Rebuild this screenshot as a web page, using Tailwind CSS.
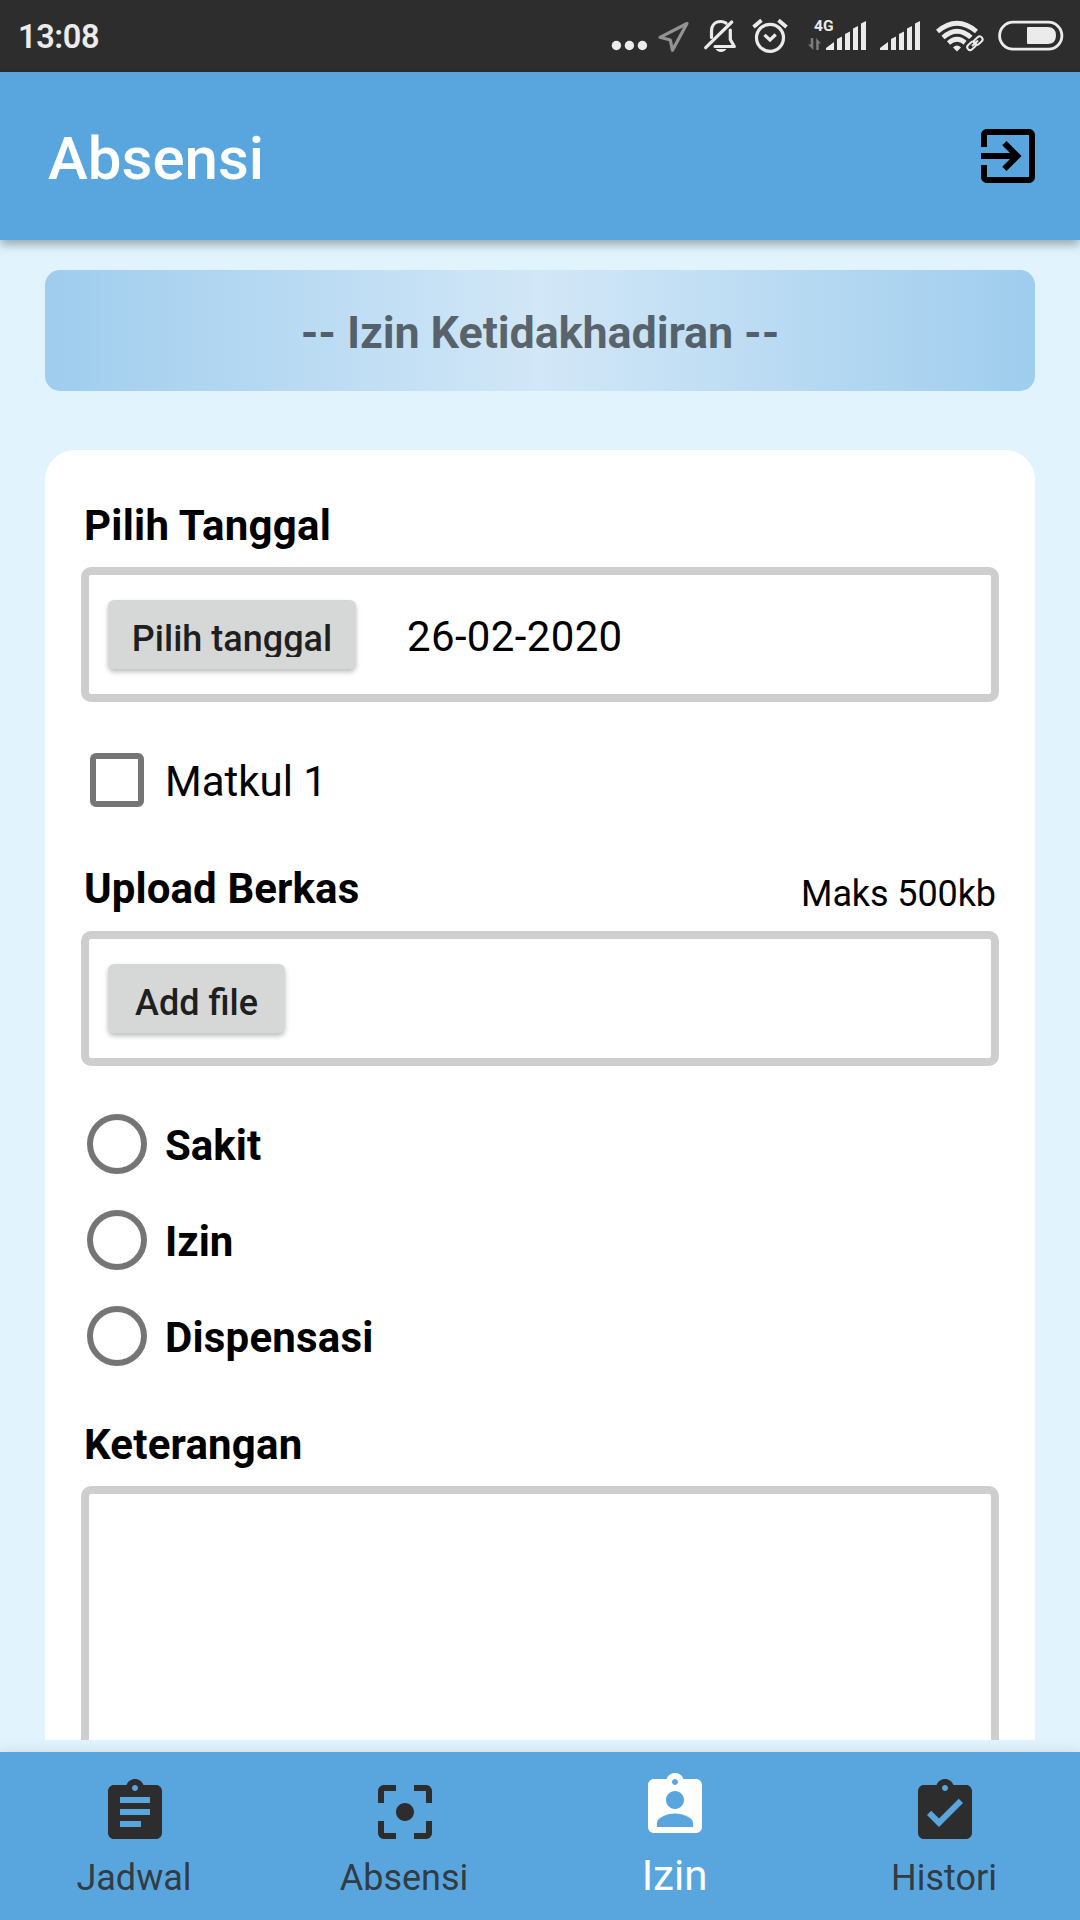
<!DOCTYPE html>
<html lang="id">
<head>
<meta charset="utf-8">
<title>Absensi</title>
<script src="https://cdn.jsdelivr.net/npm/@tailwindcss/browser@4"></script>
</head>
<body class="bg-[#e1f4fe] font-['Roboto',sans-serif] text-black">
<div class="flex h-[1920px] w-[1080px] flex-col overflow-hidden">
  <!-- Status bar -->
  <div class="flex h-[72px] shrink-0 items-center bg-[#2d2d2d] text-[#ebebeb]">
    <span class="w-[610px] pt-[2px] pl-[18px] text-[32.500px] leading-[72px] font-semibold tracking-[-0.4px]">13:08</span>
    <svg class="h-[72px] w-[45px]" viewBox="610 0 45 72" fill="currentColor"><circle cx="616.4" cy="45.5" r="4.7"/><circle cx="629.4" cy="45.5" r="4.7"/><circle cx="642.4" cy="45.5" r="4.7"/></svg>
    <svg class="h-[72px] w-[45px] text-[#939393]" viewBox="655 0 45 72" fill="none" stroke="currentColor" stroke-width="3.2" stroke-linejoin="round"><path d="M687 23.5 660 37.3 670.3 40 672.5 50.3Z"/></svg>
    <svg class="h-[72px] w-[45px]" viewBox="700 0 45 72" fill="none" stroke="currentColor" stroke-width="3.2" stroke-linecap="round"><path d="M705.7 47.7 731.8 22"/><path d="M711.5 37.5V31.5C711.5 25 715.500 21.5 720.5 21.5C722.5 21.5 724.5 22.2 726 23.2"/><path d="M730.3 30V39.5L734.3 46.500H715" stroke-linejoin="round"/><path d="M715.5 49H726.5Q724.5 52 721 52Q717.5 52 715.5 49Z" fill="currentColor" stroke="none"/></svg>
    <svg class="h-[72px] w-[50px]" viewBox="745 0 50 72" fill="none" stroke="currentColor" stroke-width="3.2"><circle cx="770" cy="37.8" r="13.5"/><path d="M764.5 34.8 770 40 775.7 34.5"/><path d="M753.5 27 761.5 20.2M778.5 20.2 786.5 27" stroke-width="3.8"/></svg>
    <svg class="h-[72px] w-[80px]" viewBox="795 0 80 72" fill="currentColor"><text x="814" y="31" font-size="15.5" font-weight="700" textLength="19.5" lengthAdjust="spacingAndGlyphs">4G</text><g fill="#7c7c7c"><path d="M810.8 38H813.3V50L808 44.5H810.8Z"/><path d="M816.2 50H818.7V43.500H821L816.2 38Z"/></g><path d="M826 50V48L834 42V50ZM837 50V39L842 36.5V50ZM845 50V34L850 31.5V50ZM853 50V28.5L858 26V50ZM861 50V23.5L866 21V50Z"/></svg>
    <svg class="h-[72px] w-[50px]" viewBox="875 0 50 72" fill="currentColor"><path d="M880 50V48L888 42V50ZM891 50V39L896 36.5V50ZM899 50V34L904 31.5V50ZM907 50V28.5L912 26V50ZM915 50V23.5L920 21V50Z"/></svg>
    <svg class="h-[72px] w-[65px]" viewBox="925 0 65 72" fill="none" stroke="currentColor" stroke-width="4.6"><path d="M937.5 31.500Q957 15 976.5 31.5"/><path d="M943 37.500Q957 25 971 37.5"/><path d="M948.5 43Q957 35.5 965.5 43"/><path d="M953 47.500Q957 43.5 961 47.5L957 51.5Z" fill="currentColor" stroke="none"/><rect x="966.500" y="42.5" width="9.5" height="5.6" rx="2.8" transform="rotate(-42 971.25 45.3)" stroke="#2d2d2d" stroke-width="7"/><g stroke-width="2"><rect x="966.8" y="43" width="9.5" height="5.8" rx="2.9" transform="rotate(-42 971.5 45.9)"/><rect x="973.5" y="37.7" width="9.5" height="5.8" rx="2.9" transform="rotate(-42 978.25 40.6)"/><path d="M972 46 978 40.5"/></g></svg>
    <svg class="h-[72px] w-[90px]" viewBox="990 0 90 72"><rect x="999.6" y="22.2" width="62.3" height="27" rx="13.5" fill="none" stroke="currentColor" stroke-width="2.8"/><path d="M1028 27H1047.5Q1056 27 1056 35.500Q1056 44 1047.5 44H1028Q1027 44 1027 43V28Q1027 27 1028 27Z" fill="currentColor"/></svg>
  </div>

  <!-- App bar -->
  <header class="z-10 flex h-[168px] shrink-0 items-center justify-between bg-[#59a6de] pr-9 pl-12 shadow-[0_5px_9px_rgba(0,0,0,0.3)]">
    <h1 class="pt-[6px] text-[60px] leading-[72px] font-medium text-white">Absensi</h1>
    <svg class="size-[72px]" viewBox="0 0 24 24"><path d="M10.090 15.590 11.500 17l5-5-5-5-1.410 1.410L12.670 11H3v2h9.670l-2.580 2.590zM19 3H5c-1.110 0-2 .9-2 2v4h2V5h14v14H5v-4H3v4c0 1.100.89 2 2 2h14c1.100 0 2-.9 2-2V5c0-1.100-.9-2-2-2z"/></svg>
  </header>

  <!-- Scrolling content -->
  <main class="flex h-[1500px] shrink-0 flex-col overflow-hidden px-[45px] pt-[30px]">
    <div class="flex h-[121px] shrink-0 items-center justify-center rounded-[15px] bg-linear-to-r/srgb from-[#9fcdee] via-[#d2e7f7] to-[#9fcdee] pt-[5px] text-[45px] leading-[54px] font-bold tracking-[-0.15px] text-black/56">-- Izin Ketidakhadiran --</div>

    <section class="mt-[59px] flex h-[1400px] shrink-0 flex-col rounded-t-[30px] bg-white px-9 pt-[51px] text-[42px] leading-[50px]">
      <h2 class="pl-[3px] font-bold tracking-[0.25px]">Pilih Tanggal</h2>
      <div class="mt-4 flex h-[135px] shrink-0 items-center rounded-[10px] border-8 border-[#cecece] pl-[19px]">
        <button class="flex h-[69px] w-[248px] justify-center rounded-[6px] bg-[#d6d8d7] pt-[14px] text-[36px] font-medium text-[#1f1f1f] shadow-[0_3px_5px_rgba(0,0,0,0.26)]"><span class="h-[43px] overflow-hidden leading-[50px]">Pilih tanggal</span></button>
        <span class="ml-[51px] pt-[5px] tracking-[0.35px]">26-02-2020</span>
      </div>

      <label class="mt-[30px] flex h-24 shrink-0 items-center pl-[9px]">
        <span class="size-[54px] rounded-[6px] border-6 border-[#757575]"></span>
        <span class="ml-[21px] pt-[3px]">Matkul 1</span>
      </label>

      <div class="mt-9 flex h-[50px] shrink-0 justify-between pr-[3px] pl-[3px]">
        <h2 class="font-bold tracking-[0.1px]">Upload Berkas</h2>
        <span class="pt-[5px] text-[36px] leading-[50px] tracking-[-0.1px]">Maks 500kb</span>
      </div>
      <div class="mt-[17px] flex h-[135px] shrink-0 items-center rounded-[10px] border-8 border-[#cecece] pl-[19px]">
        <button class="flex h-[69px] w-[177px] justify-center rounded-[6px] bg-[#d6d8d7] pt-[14px] text-[36px] leading-[50px] font-medium text-[#1f1f1f] shadow-[0_3px_5px_rgba(0,0,0,0.26)]">Add file</button>
      </div>

      <div class="mt-[30px] flex flex-col font-bold">
        <label class="flex h-24 items-center pl-[6px]"><span class="size-[60px] rounded-full border-6 border-[#757575]"></span><span class="ml-[18px] pt-[3px]">Sakit</span></label>
        <label class="flex h-24 items-center pl-[6px]"><span class="size-[60px] rounded-full border-6 border-[#757575]"></span><span class="ml-[18px] pt-[3px]">Izin</span></label>
        <label class="flex h-24 items-center pl-[6px]"><span class="size-[60px] rounded-full border-6 border-[#757575]"></span><span class="ml-[18px] pt-[3px] tracking-[0.2px]">Dispensasi</span></label>
      </div>

      <h2 class="mt-9 pl-[3px] font-bold tracking-[0.2px]">Keterangan</h2>
      <div class="mt-4 h-[400px] shrink-0 rounded-[10px] border-8 border-[#cecece]"></div>
    </section>
  </main>

  <!-- Bottom navigation -->
  <nav class="mt-3 grid h-[168px] shrink-0 grid-cols-4 bg-[#59a6de] text-[36px] leading-[48px] text-[#2d2d2d] shadow-[0_0_12px_rgba(0,0,0,0.13)]">
    <a class="flex flex-col items-center pt-6">
      <svg class="size-[72px]" viewBox="0 0 24 24" fill="currentColor"><path d="M19 3h-4.180C14.400 1.840 13.300 1 12 1c-1.300 0-2.400.84-2.820 2H5c-1.100 0-2 .9-2 2v14c0 1.100.9 2 2 2h14c1.100 0 2-.9 2-2V5c0-1.100-.9-2-2-2zm-7 0c.55 0 1 .45 1 1s-.45 1-1 1-1-.45-1-1 .45-1 1-1zm2 14H7v-2h7v2zm3-4H7v-2h10v2zm0-4H7V7h10v2z"/></svg>
      <span class="mt-[6px] pr-[2px] text-[#2d2d2d]/90">Jadwal</span>
    </a>
    <a class="flex flex-col items-center pt-6">
      <svg class="size-[72px]" viewBox="0 0 24 24" fill="currentColor"><path d="M5 15H3v4c0 1.100.9 2 2 2h4v-2H5v-4zM5 5h4V3H5c-1.100 0-2 .9-2 2v4h2V5zm14-2h-4v2h4v4h2V5c0-1.100-.9-2-2-2zm0 16h-4v2h4c1.100 0 2-.9 2-2v-4h-2v4zM12 9c-1.660 0-3 1.340-3 3s1.340 3 3 3 3-1.340 3-3-1.340-3-3-3z"/></svg>
      <span class="mt-[6px] pr-[2px] text-[#2d2d2d]/90">Absensi</span>
    </a>
    <a class="flex flex-col items-center pt-[18px] text-white">
      <svg class="size-[72px]" viewBox="0 0 24 24" fill="currentColor"><path d="M19 3h-4.180C14.400 1.840 13.300 1 12 1c-1.300 0-2.400.84-2.820 2H5c-1.100 0-2 .9-2 2v14c0 1.100.9 2 2 2h14c1.100 0 2-.9 2-2V5c0-1.100-.9-2-2-2zm-7 0c.55 0 1 .45 1 1s-.45 1-1 1-1-.45-1-1 .45-1 1-1zm0 4c1.660 0 3 1.340 3 3s-1.340 3-3 3-3-1.340-3-3 1.340-3 3-3zm6 12H6v-1.400c0-2 4-3.100 6-3.100s6 1.100 6 3.100V19z"/></svg>
      <span class="mt-[10px] pr-[1px] text-[42px]">Izin</span>
    </a>
    <a class="flex flex-col items-center pt-6">
      <svg class="size-[72px]" viewBox="0 0 24 24" fill="currentColor"><path d="M19 3h-4.180C14.400 1.840 13.300 1 12 1c-1.300 0-2.400.84-2.820 2H5c-1.100 0-2 .9-2 2v14c0 1.100.9 2 2 2h14c1.100 0 2-.9 2-2V5c0-1.100-.9-2-2-2zm-7 0c.55 0 1 .45 1 1s-.45 1-1 1-1-.45-1-1 .45-1 1-1zm-2 14l-4-4 1.410-1.410L10 14.170l6.590-6.590L18 9l-8 8z"/></svg>
      <span class="mt-[6px] pr-[2px] text-[#2d2d2d]/90">Histori</span>
    </a>
  </nav>
</div>
</body>
</html>
